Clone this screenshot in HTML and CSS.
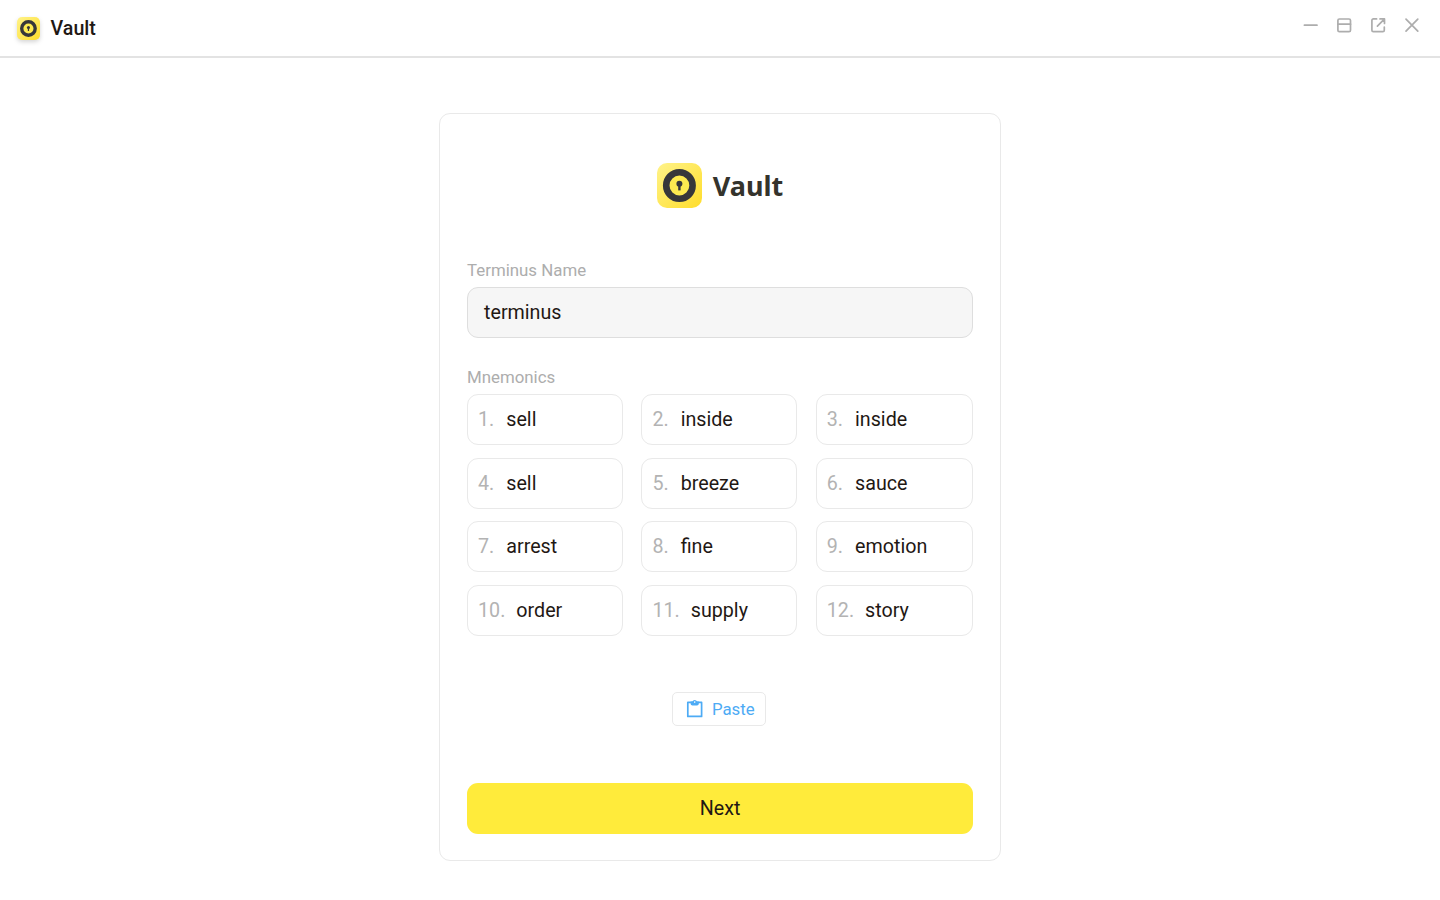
FILE: index.html
```html
<!DOCTYPE html>
<html lang="en">
<head>
<meta charset="utf-8">
<title>Vault</title>
<link rel="stylesheet" href="styles.css">
</head>
<body>
<svg class="defs" width="0" height="0" aria-hidden="true">
  <defs>
    <linearGradient id="gold" x1="0" y1="0" x2="1" y2="1">
      <stop offset="0" stop-color="#fff38a"/>
      <stop offset="1" stop-color="#ffdd2b"/>
    </linearGradient>
    <symbol id="vault" viewBox="0 0 45 45">
      <rect width="45" height="45" rx="10" fill="url(#gold)"/>
      <circle cx="22.4" cy="22.5" r="13.2" fill="#fdea50" stroke="#37373a" stroke-width="6.6"/>
      <circle cx="22.4" cy="20.7" r="3" fill="#37373a"/>
      <path d="M21.2 20h2.4v7.4h-2.4z" fill="#37373a"/>
    </symbol>
  </defs>
</svg>
<header class="titlebar">
  <div class="app">
    <svg class="app-icon"><use href="#vault"/></svg>
    <span class="app-name">Vault</span>
  </div>
  <div class="controls">
    <svg viewBox="0 0 20 20"><path d="M3.4 10.2h12.6"/></svg>
    <svg viewBox="0 0 20 20"><rect x="3.9" y="4" width="12.6" height="12.7" rx="1.5"/><path d="M4 9.2h12.5"/></svg>
    <svg viewBox="0 0 20 20"><path d="M8.6 3.9H5.4a1.5 1.5 0 0 0-1.5 1.5v9.8a1.5 1.5 0 0 0 1.5 1.5h9.4a1.5 1.5 0 0 0 1.5-1.5V12M12 3.9h4.5v4.5M16.3 4.1l-6.9 7"/></svg>
    <svg viewBox="0 0 20 20"><path d="M4 4.2l11.8 12M15.8 4.2L4 16.2"/></svg>
  </div>
</header>
<main class="page">
  <section class="card">
    <div class="brand">
      <svg class="brand-icon"><use href="#vault"/></svg>
      <span class="brand-name">Vault</span>
    </div>
    <div class="label">Terminus Name</div>
    <div class="field">terminus</div>
    <div class="label">Mnemonics</div>
    <div class="words">
      <div class="word"><span class="num">1.</span>sell</div>
      <div class="word"><span class="num">2.</span>inside</div>
      <div class="word"><span class="num">3.</span>inside</div>
      <div class="word"><span class="num">4.</span>sell</div>
      <div class="word"><span class="num">5.</span>breeze</div>
      <div class="word"><span class="num">6.</span>sauce</div>
      <div class="word"><span class="num">7.</span>arrest</div>
      <div class="word"><span class="num">8.</span>fine</div>
      <div class="word"><span class="num">9.</span>emotion</div>
      <div class="word"><span class="num wide">10.</span>order</div>
      <div class="word"><span class="num wide">11.</span>supply</div>
      <div class="word"><span class="num wide">12.</span>story</div>
    </div>
    <div class="paste">
      <svg viewBox="0 0 20 20"><path class="board" d="M2.8 3.4h13.8v14H2.8z"/><path class="clip" d="M5.6 2.6h1.8a2.4 2.4 0 0 1 4.6 0h1.8v2.2a1.8 1.8 0 0 1-1.8 1.8H7.4a1.8 1.8 0 0 1-1.8-1.8z"/><circle class="hole" cx="9.7" cy="3.1" r=".8"/></svg>
      <span>Paste</span>
    </div>
    <div class="next">Next</div>
  </section>
</main>
</body>
</html>
```
FILE: styles.css
```css
* { box-sizing: border-box; }
body {
  margin: 0;
  width: 1440px;
  height: 900px;
  overflow: hidden;
  background: #fff;
  color: #1f1814;
  font-family: Roboto, sans-serif;
  font-size: 19.7px;
  line-height: 24px;
}
svg { display: block; }
.defs { position: absolute; }
.titlebar {
  display: flex;
  justify-content: space-between;
  height: 58px;
  padding: 0 18px 0 16.5px;
  border-bottom: 2px solid #e3e3e3;
}
.app { display: flex; align-items: center; gap: 11px; }
.app-icon {
  width: 23px;
  height: 23px;
  overflow: visible;
  filter: drop-shadow(0 2px 2px rgba(0, 0, 0, .16));
}
.app-name { padding-top: 2px; font-weight: 500; }
.controls { display: flex; gap: 13.8px; padding-top: 15px; }
.controls svg {
  width: 20px;
  height: 20px;
  fill: none;
  stroke: #adadad;
  stroke-width: 1.7;
  stroke-linecap: round;
  stroke-linejoin: round;
}
.page { display: flex; justify-content: center; padding-top: 55px; }
.card {
  width: 562px;
  height: 748px;
  padding: 49px 27px 0;
  border: 1.4px solid #e9e9e9;
  border-radius: 11px;
}
.brand {
  display: flex;
  justify-content: center;
  align-items: center;
  gap: 11px;
  height: 45px;
  margin-bottom: 51px;
}
.brand-icon { width: 45px; height: 45px; }
.brand-name {
  color: #34332c;
  font: 700 27px/36px "Noto Sans", sans-serif;
}
.label {
  height: 28px;
  color: #adadad;
  font-size: 16.85px;
  line-height: 23px;
}
.field {
  height: 51px;
  margin-bottom: 28px;
  padding: 0 16px;
  border: 1.4px solid #dedede;
  border-radius: 11px;
  background: #f6f6f6;
  line-height: 49px;
}
.words {
  display: grid;
  grid-template-columns: 156px 156px 157px;
  grid-auto-rows: 51px;
  gap: 12.5px 18.4px;
}
.word {
  padding-left: 10px;
  border: 1.4px solid #e9e9e9;
  border-radius: 11px;
  line-height: 50px;
}
.num { margin-right: 12px; color: #b3b3b3; }
.num.wide { margin-right: 11px; }
.paste {
  display: flex;
  align-items: center;
  gap: 7px;
  width: 94px;
  height: 34px;
  margin: 56px auto 57px;
  padding-left: 12px;
  border: 1.4px solid #e9e9e9;
  border-radius: 5px;
  color: #4dabf5;
  font-size: 16.8px;
  position: relative;
  left: -1px;
}
.paste svg { width: 20px; height: 20px; }
.board { fill: none; stroke: #4dabf5; stroke-width: 1.7; stroke-linejoin: round; }
.clip { fill: #4dabf5; }
.hole { fill: #fff; }
.next {
  height: 51px;
  border-radius: 11px;
  background: #ffeb3b;
  line-height: 51px;
  text-align: center;
}
```
